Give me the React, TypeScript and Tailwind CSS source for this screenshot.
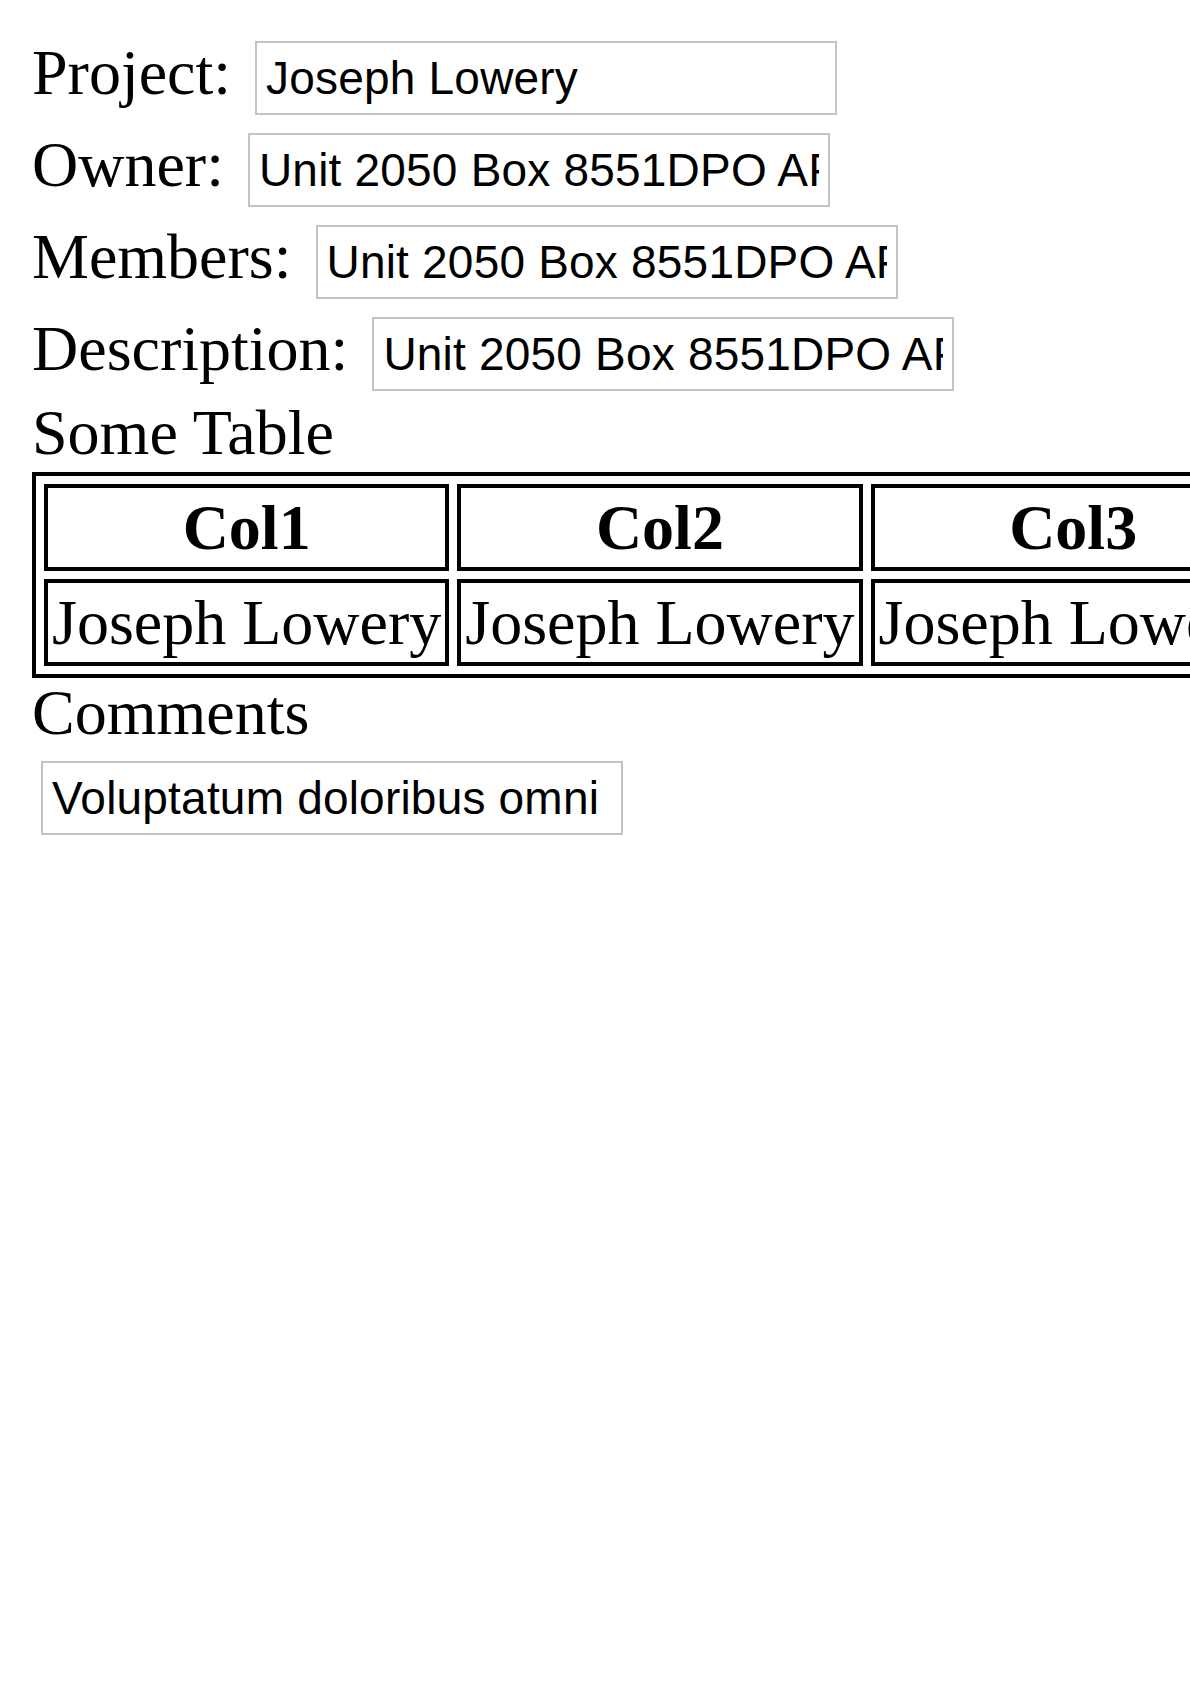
import React from "react";

const serif = "font-['Liberation_Serif','Times_New_Roman',serif]";
const inputCls =
  "block w-[582px] h-[74px] border-2 border-[#c4c4c4] bg-white px-[9px] text-[46px] tracking-[0.2px] text-black font-['Liberation_Sans','Arial',sans-serif] outline-none";

const fields = [
  { label: "Project:", value: "Joseph Lowery" },
  { label: "Owner:", value: "Unit 2050 Box 8551DPO AP 40326" },
  { label: "Members:", value: "Unit 2050 Box 8551DPO AP 40326" },
  { label: "Description:", value: "Unit 2050 Box 8551DPO AP 40326" },
];

const cell = "border-4 border-black p-1 leading-[71px]";

export default function App() {
  return (
    <div className={`w-[1190px] h-[1684px] overflow-hidden bg-white text-black ${serif}`}>
      <div className="pl-[32px] pt-[41px]">
        {/* Form rows */}
        {fields.map((f, i) => (
          <div
            key={f.label}
            className={`flex items-baseline gap-[24px] ${i < fields.length - 1 ? "h-[92px]" : ""}`}
          >
            <span className="text-[64px] leading-none whitespace-nowrap">{f.label}</span>
            <input className={inputCls} readOnly defaultValue={f.value} />
          </div>
        ))}

        <div className="mt-[10px] text-[64px] leading-none">Some Table</div>

        <table className="mt-[7px] border-4 border-black border-separate border-spacing-2 text-[64px]">
          <thead>
            <tr>
              <th className={`${cell} font-bold text-center`}>Col1</th>
              <th className={`${cell} font-bold text-center`}>Col2</th>
              <th className={`${cell} font-bold text-center`}>Col3</th>
            </tr>
          </thead>
          <tbody>
            <tr>
              <td className={`${cell} whitespace-nowrap`}>Joseph Lowery</td>
              <td className={`${cell} whitespace-nowrap`}>Joseph Lowery</td>
              <td className={`${cell} whitespace-nowrap`}>Joseph Lowery</td>
            </tr>
          </tbody>
        </table>

        <div className="mt-[3px] text-[64px] leading-none">Comments</div>
        <div className="mt-[16px] ml-[9px]">
          <input className={inputCls} readOnly defaultValue="Voluptatum doloribus omni" />
        </div>
      </div>
    </div>
  );
}
